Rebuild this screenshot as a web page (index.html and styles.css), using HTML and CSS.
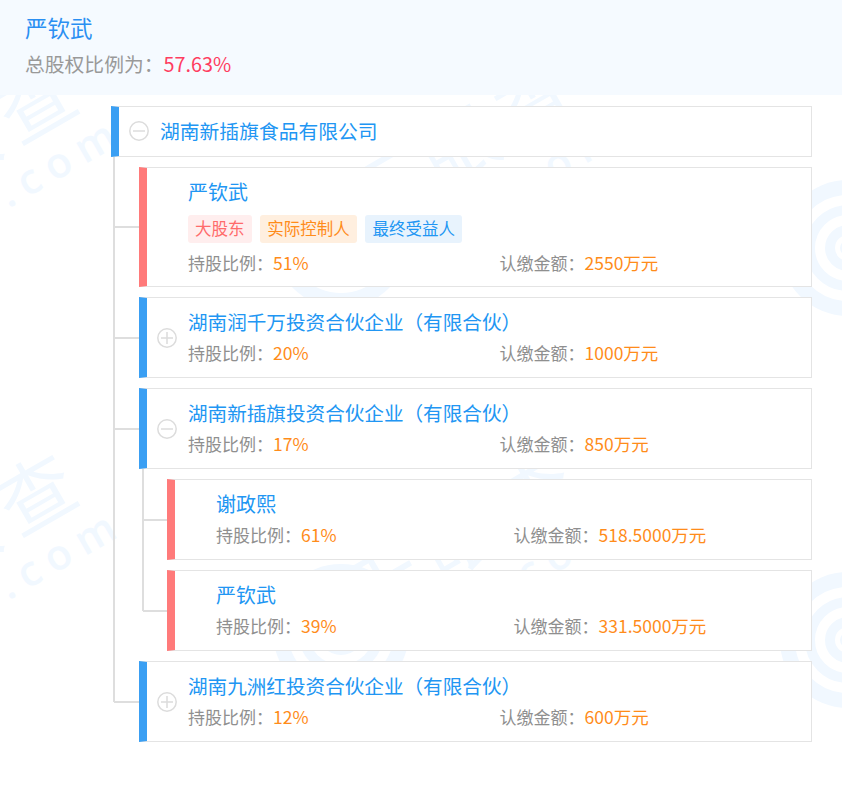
FILE: index.html
```html
<!DOCTYPE html>
<html lang="zh-CN">
<head>
<meta charset="utf-8">
<title>股权穿透</title>
<link rel="stylesheet" href="styles.css">
</head>
<body>
<svg class="watermark" width="842" height="792" viewBox="0 0 842 792" aria-hidden="true">
  <defs>
    <g id="wm-logo">
      <circle class="wm-fill" r="68"/>
      <circle class="wm-ring" r="48" stroke-width="10"/>
      <circle class="wm-ring" r="28" stroke-width="10"/>
      <circle class="wm-ring" r="10.5" stroke-width="5"/>
    </g>
    <g id="wm-text">
      <text class="wm-cjk" x="49" y="28" text-anchor="end">天眼查</text>
      <text class="wm-com" x="-78" y="78">.com</text>
    </g>
  </defs>
  <use href="#wm-logo" x="341" y="240"/>
  <use href="#wm-logo" x="848" y="248"/>
  <use href="#wm-logo" x="341" y="632"/>
  <use href="#wm-logo" x="848" y="640"/>
  <use href="#wm-text" transform="translate(37 102) rotate(-30)"/>
  <use href="#wm-text" transform="translate(37 494) rotate(-30)"/>
  <use href="#wm-text" transform="translate(537 102) rotate(-30)"/>
  <use href="#wm-text" transform="translate(537 494) rotate(-30)"/>
</svg>

<header class="summary">
  <div class="summary-name">严钦武</div>
  <div class="summary-ratio">总股权比例为：<span class="summary-value">57.63%</span></div>
</header>

<main class="tree">
  <div class="card card-root">
    <svg class="toggle" viewBox="0 0 20 20"><circle cx="10" cy="10" r="9.2"/><path d="M4 10h12"/></svg>
    <div class="card-name">湖南新插旗食品有限公司</div>
  </div>
  <div class="children">
    <div class="node">
      <div class="card card-person card-tall">
        <span class="toggle-slot"></span>
        <div class="card-body">
          <div class="card-name">严钦武</div>
          <div class="tags">
            <span class="tag tag-red">大股东</span>
            <span class="tag tag-orange">实际控制人</span>
            <span class="tag tag-blue">最终受益人</span>
          </div>
          <div class="stats">
            <div class="stat"><span class="stat-label">持股比例：</span><span class="stat-value">51%</span></div>
            <div class="stat"><span class="stat-label">认缴金额：</span><span class="stat-value">2550万元</span></div>
          </div>
        </div>
      </div>
    </div>
    <div class="node">
      <div class="card card-company">
        <svg class="toggle" viewBox="0 0 20 20"><circle cx="10" cy="10" r="9.2"/><path d="M4 10h12M10 4v12"/></svg>
        <div class="card-body">
          <div class="card-name">湖南润千万投资合伙企业（有限合伙）</div>
          <div class="stats">
            <div class="stat"><span class="stat-label">持股比例：</span><span class="stat-value">20%</span></div>
            <div class="stat"><span class="stat-label">认缴金额：</span><span class="stat-value">1000万元</span></div>
          </div>
        </div>
      </div>
    </div>
    <div class="node">
      <div class="card card-company">
        <svg class="toggle" viewBox="0 0 20 20"><circle cx="10" cy="10" r="9.2"/><path d="M4 10h12"/></svg>
        <div class="card-body">
          <div class="card-name">湖南新插旗投资合伙企业（有限合伙）</div>
          <div class="stats">
            <div class="stat"><span class="stat-label">持股比例：</span><span class="stat-value">17%</span></div>
            <div class="stat"><span class="stat-label">认缴金额：</span><span class="stat-value">850万元</span></div>
          </div>
        </div>
      </div>
      <div class="children children-nested">
        <div class="node">
          <div class="card card-person">
            <span class="toggle-slot"></span>
            <div class="card-body">
              <div class="card-name">谢政熙</div>
              <div class="stats">
                <div class="stat"><span class="stat-label">持股比例：</span><span class="stat-value">61%</span></div>
                <div class="stat"><span class="stat-label">认缴金额：</span><span class="stat-value">518.5000万元</span></div>
              </div>
            </div>
          </div>
        </div>
        <div class="node">
          <div class="card card-person">
            <span class="toggle-slot"></span>
            <div class="card-body">
              <div class="card-name">严钦武</div>
              <div class="stats">
                <div class="stat"><span class="stat-label">持股比例：</span><span class="stat-value">39%</span></div>
                <div class="stat"><span class="stat-label">认缴金额：</span><span class="stat-value">331.5000万元</span></div>
              </div>
            </div>
          </div>
        </div>
      </div>
    </div>
    <div class="node">
      <div class="card card-company">
        <svg class="toggle" viewBox="0 0 20 20"><circle cx="10" cy="10" r="9.2"/><path d="M4 10h12M10 4v12"/></svg>
        <div class="card-body">
          <div class="card-name">湖南九洲红投资合伙企业（有限合伙）</div>
          <div class="stats">
            <div class="stat"><span class="stat-label">持股比例：</span><span class="stat-value">12%</span></div>
            <div class="stat"><span class="stat-label">认缴金额：</span><span class="stat-value">600万元</span></div>
          </div>
        </div>
      </div>
    </div>
  </div>
</main>
</body>
</html>
```
FILE: styles.css
```css
* {
  box-sizing: border-box;
}

html,
body {
  margin: 0;
  padding: 0;
  background: #fff;
}

body {
  position: relative;
  height: 792px;
  overflow: hidden;
  font-family: "Noto Sans CJK SC", "Noto Sans", sans-serif;
}

/* watermark */
.watermark {
  position: absolute;
  left: 0;
  top: 0;
  z-index: 0;
}

.wm-fill {
  fill: #f1f8ff;
}

.wm-ring {
  fill: none;
  stroke: #fff;
}

.wm-cjk {
  font-family: "Noto Sans CJK SC", sans-serif;
  font-size: 76px;
  letter-spacing: 12px;
  fill: #f1f8ff;
}

.wm-com {
  font-family: "Open Sans", sans-serif;
  font-size: 42px;
  font-weight: 600;
  letter-spacing: 10px;
  fill: #f1f8ff;
}

/* summary header */
.summary {
  position: relative;
  z-index: 1;
  height: 95px;
  padding: 13px 25px 0;
  background: #f5faff;
}

.summary-name {
  font-size: 22.5px;
  line-height: 28px;
  color: #2a8ff2;
}

.summary-ratio {
  margin-top: 9px;
  font-size: 19.8px;
  line-height: 28px;
  color: #999;
}

.summary-value {
  color: #ff3d5f;
}

/* tree */
.tree {
  position: relative;
  z-index: 1;
  padding: 11px 30px 0 111px;
}

.children {
  display: flow-root;
  position: relative;
  margin-left: 28px;
}

.children::before {
  content: "";
  position: absolute;
  left: -26px;
  top: 0;
  bottom: 40px;
  width: 2px;
  background: #dedede;
}

.children-nested::before {
  left: -25px;
}

.node {
  margin-top: 10.6px;
}

.card {
  position: relative;
  display: flex;
  align-items: center;
  height: 80.4px;
  background: #fff;
  border: 1px solid #e4e4e4;
  border-left: 8px solid #3a9ff3;
}

.node > .card::after {
  content: "";
  position: absolute;
  left: -33px;
  top: 50%;
  width: 25px;
  height: 2px;
  margin-top: -1px;
  background: #dedede;
}

.children-nested > .node > .card::after {
  left: -32px;
  width: 24px;
}

.card-root {
  height: 50.7px;
}

.card-tall {
  height: 119.6px;
}

.card-person {
  border-left-color: #ff7a7a;
}

.toggle {
  flex: none;
  width: 20px;
  height: 20px;
  margin: 0 11px 0 10px;
  fill: none;
  stroke: #dcdcdc;
  stroke-width: 1.5;
}

.toggle-slot {
  flex: none;
  width: 41px;
}

.card-body {
  flex: 1;
  align-self: flex-start;
  padding-top: 11px;
  min-width: 0;
}

.card-name {
  font-size: 19.6px;
  line-height: 26px;
  color: #2196f3;
  white-space: nowrap;
}

.card-root .card-name {
  font-size: 19.8px;
}

.card-person .card-name {
  font-size: 20px;
}

.stats {
  display: flex;
  margin-top: 5px;
}

.tags + .stats {
  margin-top: 7px;
}

.stat {
  width: 50%;
  font-size: 17px;
  line-height: 26px;
  white-space: nowrap;
}

.stat-label {
  color: #8f8f8f;
}

.stat-value {
  font-size: 17.5px;
  color: #ff8c1a;
}

.tags {
  display: flex;
  gap: 8.7px;
  margin-top: 10px;
}

.tag {
  height: 28px;
  padding: 0 7px;
  border-radius: 3px;
  font-size: 16.5px;
  line-height: 26px;
}

.tag-red {
  background: #ffeeee;
  color: #ff6b6b;
}

.tag-orange {
  background: #ffefdf;
  color: #ff8c1a;
}

.tag-blue {
  background: #e8f3fd;
  color: #2196f3;
}
```
